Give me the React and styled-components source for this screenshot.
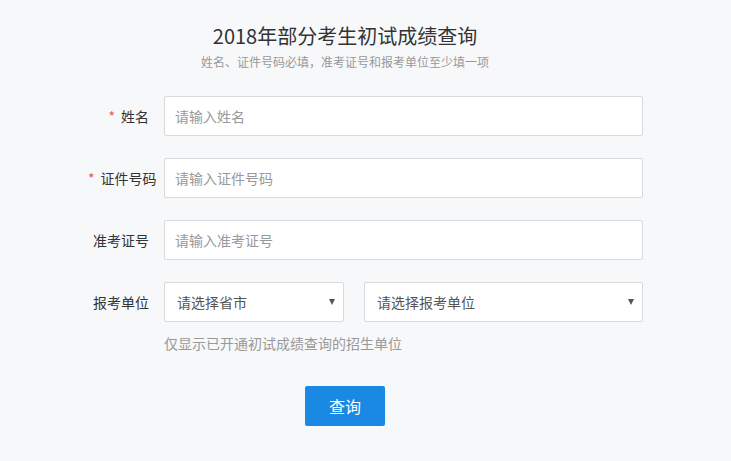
import React from "react";
import styled, { createGlobalStyle } from "styled-components";

const GlobalStyle = createGlobalStyle`
  html, body {
    margin: 0;
    padding: 0;
    background: #f7f8fa;
  }
  body {
    font-family: "Noto Sans CJK SC", "Liberation Sans", sans-serif;
    color: #333;
  }
  * { box-sizing: border-box; }
`;

const Page = styled.div`
  width: 731px;
  height: 461px;
  padding-top: 21px;
`;

const Header = styled.header`
  width: 690px;
  display: flex;
  flex-direction: column;
  align-items: center;
`;

const Title = styled.h1`
  margin: 0;
  font-size: 20px;
  font-weight: normal;
  line-height: 30px;
  color: #333;
`;

const Subtitle = styled.p`
  margin: 3px 0 0;
  font-size: 12px;
  line-height: 16px;
  color: #999;
`;

const Form = styled.form`
  width: 555px;
  margin: 26px 0 0 88px;
  display: flex;
  flex-direction: column;
  gap: 22px;
`;

const Row = styled.div`
  display: flex;
  align-items: center;
`;

const Label = styled.label`
  width: 61px;
  margin-right: 15px;
  text-align: right;
  font-size: 14px;
  white-space: nowrap;
  color: #333;
`;

const Star = styled.span`
  color: #f5222d;
  margin-right: 6px;
  opacity: 0.8;
`;

const Input = styled.input`
  width: 479px;
  height: 40px;
  padding: 0 10px;
  border: 1px solid #d9d9d9;
  border-radius: 2px;
  background: #fff;
  font-family: inherit;
  font-size: 14px;
  outline: none;
  color: #333;
  &::placeholder { color: #999; }
`;

const Selects = styled.div`
  display: flex;
  gap: 20px;
`;

const SelectBox = styled.div`
  width: ${(p) => p.$w}px;
  height: 40px;
  padding: 0 8px 0 12px;
  border: 1px solid #d9d9d9;
  border-radius: 2px;
  background: #fff;
  display: flex;
  align-items: center;
  justify-content: space-between;
  font-size: 14px;
  color: #555;
`;

const Caret = styled.span`
  width: 0;
  height: 0;
  border-left: 3.5px solid transparent;
  border-right: 3.5px solid transparent;
  border-top: 6px solid #555;
`;

const Hint = styled.p`
  margin: -11px 0 0 76px;
  font-size: 14px;
  color: #999;
`;

const ButtonRow = styled.div`
  margin-top: 11px;
  padding-left: 217px;
`;

const Button = styled.button`
  width: 80px;
  height: 40px;
  border: none;
  border-radius: 2px;
  background: #1a89e4;
  color: #fff;
  font-family: inherit;
  font-size: 16px;
  cursor: pointer;
`;

function Field({ label, required, placeholder }) {
  return (
    <Row>
      <Label>
        {required && <Star>*</Star>}
        {label}
      </Label>
      <Input placeholder={placeholder} />
    </Row>
  );
}

export default function App() {
  return (
    <>
      <GlobalStyle />
      <Page>
        <Header>
          <Title>2018年部分考生初试成绩查询</Title>
          <Subtitle>姓名、证件号码必填，准考证号和报考单位至少填一项</Subtitle>
        </Header>
        <Form onSubmit={(e) => e.preventDefault()}>
          <Field label="姓名" required placeholder="请输入姓名" />
          <Field label="证件号码" required placeholder="请输入证件号码" />
          <Field label="准考证号" placeholder="请输入准考证号" />
          <Row>
            <Label>报考单位</Label>
            <Selects>
              <SelectBox $w={180}>
                请选择省市
                <Caret />
              </SelectBox>
              <SelectBox $w={279}>
                请选择报考单位
                <Caret />
              </SelectBox>
            </Selects>
          </Row>
          <Hint>仅显示已开通初试成绩查询的招生单位</Hint>
          <ButtonRow>
            <Button type="submit">查询</Button>
          </ButtonRow>
        </Form>
      </Page>
    </>
  );
}
